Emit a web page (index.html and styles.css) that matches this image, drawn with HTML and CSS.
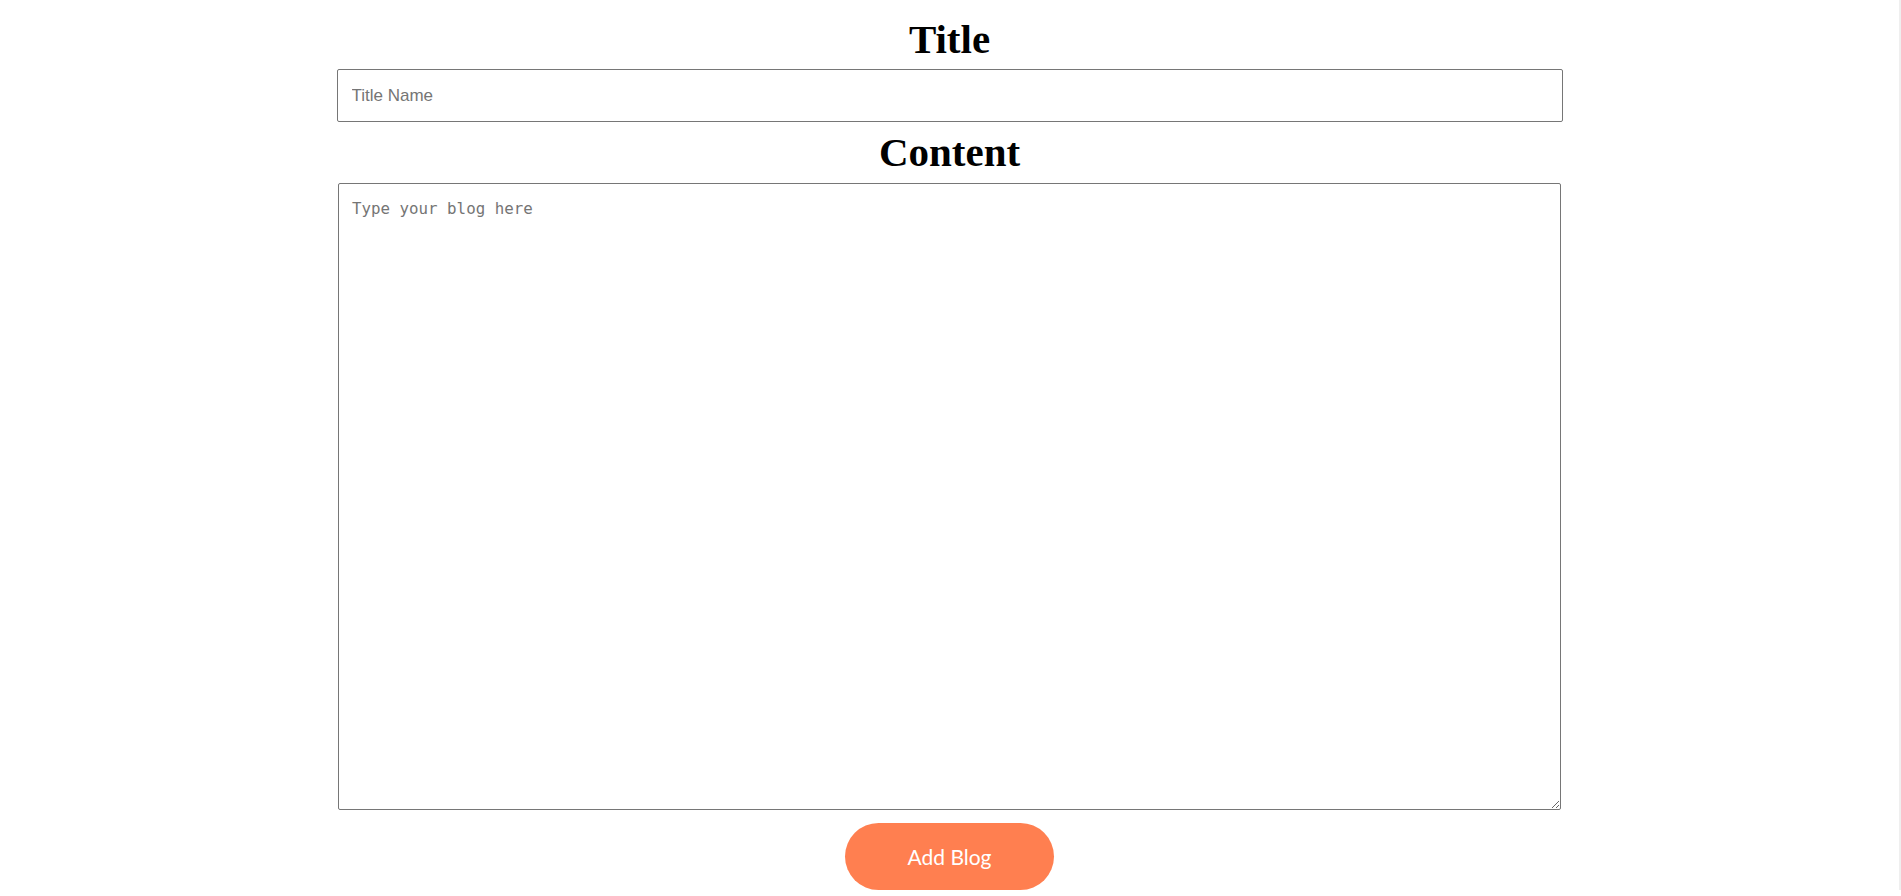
FILE: index.html
```html
<!DOCTYPE html>
<html lang="en">
<head>
<meta charset="utf-8">
<title>Add Blog</title>
<link rel="stylesheet" href="styles.css">
</head>
<body>
<form class="compose">
  <h1 class="heading">Title</h1>
  <input class="title-input" type="text" placeholder="Title Name">
  <h1 class="heading">Content</h1>
  <textarea class="content-input" placeholder="Type your blog here"></textarea>
  <button class="add-btn" type="button">Add Blog</button>
</form>
</body>
</html>
```
FILE: styles.css
```css
html {
  background: #ffffff;
  border-right: 2px solid #efefef;
}

body {
  margin: 0;
  font-family: "Liberation Serif", "Times New Roman", serif;
  color: #000;
}

.compose {
  display: flex;
  flex-direction: column;
  align-items: center;
  gap: 7px;
  padding-top: 16px;
}

.heading {
  margin: 0;
  font-size: 41px;
  line-height: 46px;
  font-weight: bold;
}

.title-input {
  box-sizing: border-box;
  width: 1226px;
  height: 53px;
  padding: 0 14px;
  border: 1px solid #767676;
  border-radius: 2px;
  font-family: "Liberation Sans", Arial, sans-serif;
  font-size: 17px;
  color: #000;
  outline: none;
}

.title-input::placeholder {
  color: #757575;
}

.content-input {
  box-sizing: border-box;
  width: 1223px;
  height: 627px;
  margin-top: 1px;
  padding: 15px 13px;
  border: 1px solid #767676;
  border-radius: 2px;
  font-family: "DejaVu Sans Mono", "Liberation Mono", monospace;
  font-size: 15.8px;
  color: #000;
  outline: none;
}

.content-input::placeholder {
  color: #757575;
}

.add-btn {
  margin-top: 6px;
  width: 209px;
  height: 67px;
  border: none;
  border-radius: 34px;
  background: #ff7f50;
  color: #ffffff;
  font-family: Lato, "Open Sans", sans-serif;
  font-size: 21px;
  cursor: pointer;
}
```
